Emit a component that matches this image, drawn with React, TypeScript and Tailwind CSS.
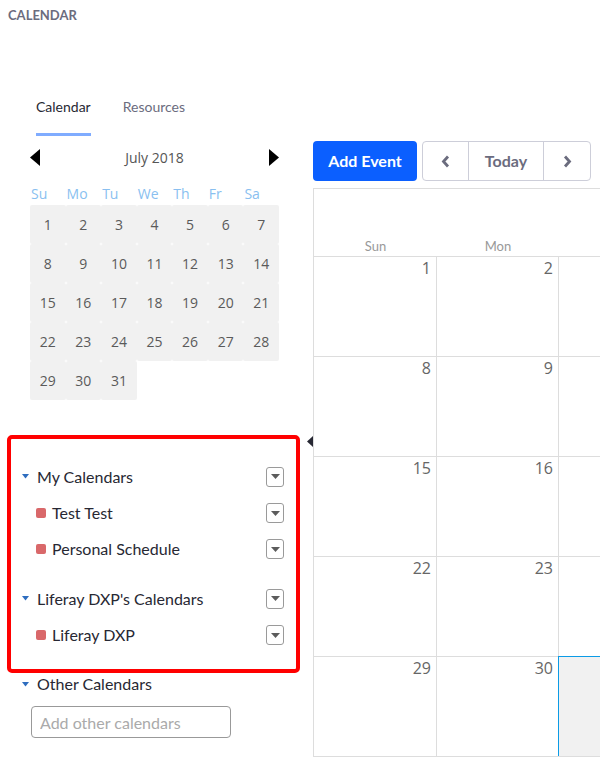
import React from 'react';

const WEEKDAYS = ['Su', 'Mo', 'Tu', 'We', 'Th', 'Fr', 'Sa'];
// only the first columns of the month view fit in the window
const BIG_DAYS = ['Sun', 'Mon', ''];

function Caret() {
  return (
    <svg width="7" height="5" viewBox="0 0 7 5" className="shrink-0">
      <path d="M0 0 L7 0 L3.5 4.5 Z" fill="#2e6dbf" />
    </svg>
  );
}

function MenuToggle() {
  return (
    <button className="ml-auto flex h-[20px] w-[18px] items-center justify-center rounded-[3px] border border-[#9a9a9a] bg-white">
      <svg width="9" height="5" viewBox="0 0 9 5">
        <path d="M0 0 L9 0 L4.5 5 Z" fill="#5c5c5c" />
      </svg>
    </button>
  );
}

function GroupRow({ label }: { label: string }) {
  return (
    <div className="flex h-[37px] items-center">
      <Caret />
      <span className="ml-[8px] text-[16px] leading-5 text-[#272833]">{label}</span>
      <MenuToggle />
    </div>
  );
}

function CalendarRow({ label }: { label: string }) {
  return (
    <div className="flex h-[36px] items-center">
      <span className="ml-[14px] h-[10px] w-[10px] shrink-0 rounded-[2px] bg-[#d9686a]" />
      <span className="ml-[6px] text-[16px] leading-5 text-[#272833]">{label}</span>
      <MenuToggle />
    </div>
  );
}

function MiniCalendar() {
  const days = Array.from({ length: 31 }, (_, i) => i + 1);
  return (
    <div className="ml-[30px] mt-[3px] w-[249px] font-['Open_Sans',sans-serif]">
      <div className="flex h-[36px] items-center justify-between">
        <svg width="10" height="17" viewBox="0 0 10 17">
          <path d="M10 0 L10 17 L0 8.5 Z" fill="#000" />
        </svg>
        <span className="text-[14px] text-[#555]">July 2018</span>
        <svg width="10" height="17" viewBox="0 0 10 17">
          <path d="M0 0 L0 17 L10 8.5 Z" fill="#000" />
        </svg>
      </div>
      <div className="grid h-[30px] grid-cols-7 pt-[9px]">
        {WEEKDAYS.map((d) => (
          <span key={d} className="pl-[1px] text-[14px] leading-5 text-[#89bff0]">
            {d}
          </span>
        ))}
      </div>
      <div className="grid grid-cols-7">
        {days.map((d) => (
          <div
            key={d}
            className="flex h-[39px] items-center justify-center rounded-[2px] bg-[#f1f1f1] text-[14px] text-[#5a5a5a]"
          >
            {d}
          </div>
        ))}
      </div>
    </div>
  );
}

function MonthGrid() {
  const weeks = [
    [1, 2, 3],
    [8, 9, 10],
    [15, 16, 17],
    [22, 23, 24],
    [29, 30, 31],
  ];

  return (
    <div className="mt-[7px] w-[287px] border-b border-[#ddd]">
      <div className="grid h-[68px] grid-cols-[123px_122px_1fr] border-l border-t border-[#ddd]">
        {BIG_DAYS.map((n, i) => (
          <div key={i} className="flex items-end justify-center pb-0 text-[13px] leading-5 text-[#999]">
            {n}
          </div>
        ))}
      </div>
      {weeks.map((row, wi) => (
        <div key={wi} className="grid h-[100px] grid-cols-[123px_122px_1fr]">
          {row.map((day, ci) => {
            const today = wi === 4 && ci === 2;
            return (
              <div
                key={ci}
                className={`border-l border-t pr-[5px] pt-[1px] text-right font-['Open_Sans',sans-serif] text-[16px] leading-5 text-[#666] ${
                  today ? 'border-[#0b9be6] bg-[#f1f1f1]' : 'border-[#ddd]'
                }`}
              >
                {ci < 2 ? day : ''}
              </div>
            );
          })}
        </div>
      ))}
    </div>
  );
}

export default function App() {
  return (
    <div className="relative h-[778px] w-[600px] overflow-hidden bg-white font-['Lato',sans-serif]">
      <div className="pl-2 pt-[5px] text-[13px] font-bold leading-5 text-[#6b6c7e]">CALENDAR</div>

      <div className="flex">
        {/* Sidebar */}
        <aside className="w-[300px] shrink-0">
          <div className="ml-[36px] flex gap-[32px] pt-[72px] text-[14px] leading-5">
            <span className="border-b-[3px] border-[#80acff] pb-[16px] text-[#272833]">Calendar</span>
            <span className="border-b-[3px] border-transparent pb-[16px] text-[#6b6c7e]">Resources</span>
          </div>

          <MiniCalendar />

          <div className="ml-[7px] mt-[35px] w-[293px] rounded-[5px] border-4 border-[#ff0000] pb-[16px] pl-[11px] pr-[12px] pt-[19px]">
            <GroupRow label="My Calendars" />
            <CalendarRow label="Test Test" />
            <CalendarRow label="Personal Schedule" />
            <div className="mt-[13px]">
              <GroupRow label="Liferay DXP's Calendars" />
              <CalendarRow label="Liferay DXP" />
            </div>
          </div>

          <div className="ml-[22px] mt-[1px] flex h-[20px] items-center">
            <Caret />
            <span className="ml-[8px] text-[16px] leading-5 text-[#272833]">Other Calendars</span>
          </div>
          <input
            type="text"
            placeholder="Add other calendars"
            className="ml-[31px] mt-[12px] h-[32px] w-[200px] rounded-[4px] border border-[#999] pl-[8px] text-[16px] text-[#333] outline-none placeholder:text-[#aaa]"
          />
        </aside>

        {/* Main */}
        <main className="ml-[13px] pt-[116px]">
          <div className="flex gap-[5px]">
            <button className="h-[40px] w-[104px] rounded-[4px] bg-[#0b5fff] text-[16px] font-bold text-white">
              Add Event
            </button>
            <div className="flex h-[40px] overflow-hidden rounded-[4px] border border-[#cdced9] text-[#6b6c7e]">
              <button className="flex w-[46px] items-center justify-center border-r border-[#cdced9]">
                <svg width="9" height="13" viewBox="0 0 9 13">
                  <path d="M7 1.5 L2.5 6.5 L7 11.5" fill="none" stroke="#6b6c7e" strokeWidth="2.8" />
                </svg>
              </button>
              <button className="w-[75px] border-r border-[#cdced9] text-[16px] font-bold">Today</button>
              <button className="flex w-[46px] items-center justify-center">
                <svg width="9" height="13" viewBox="0 0 9 13">
                  <path d="M2 1.5 L6.5 6.5 L2 11.5" fill="none" stroke="#6b6c7e" strokeWidth="2.8" />
                </svg>
              </button>
            </div>
          </div>
          <MonthGrid />
        </main>
      </div>

      {/* sidebar collapse toggle */}
      <svg width="6" height="11" viewBox="0 0 6 11" className="absolute left-[307px] top-[436px]">
        <path d="M6 0 L6 11 L0 5.5 Z" fill="#272833" />
      </svg>
    </div>
  );
}
